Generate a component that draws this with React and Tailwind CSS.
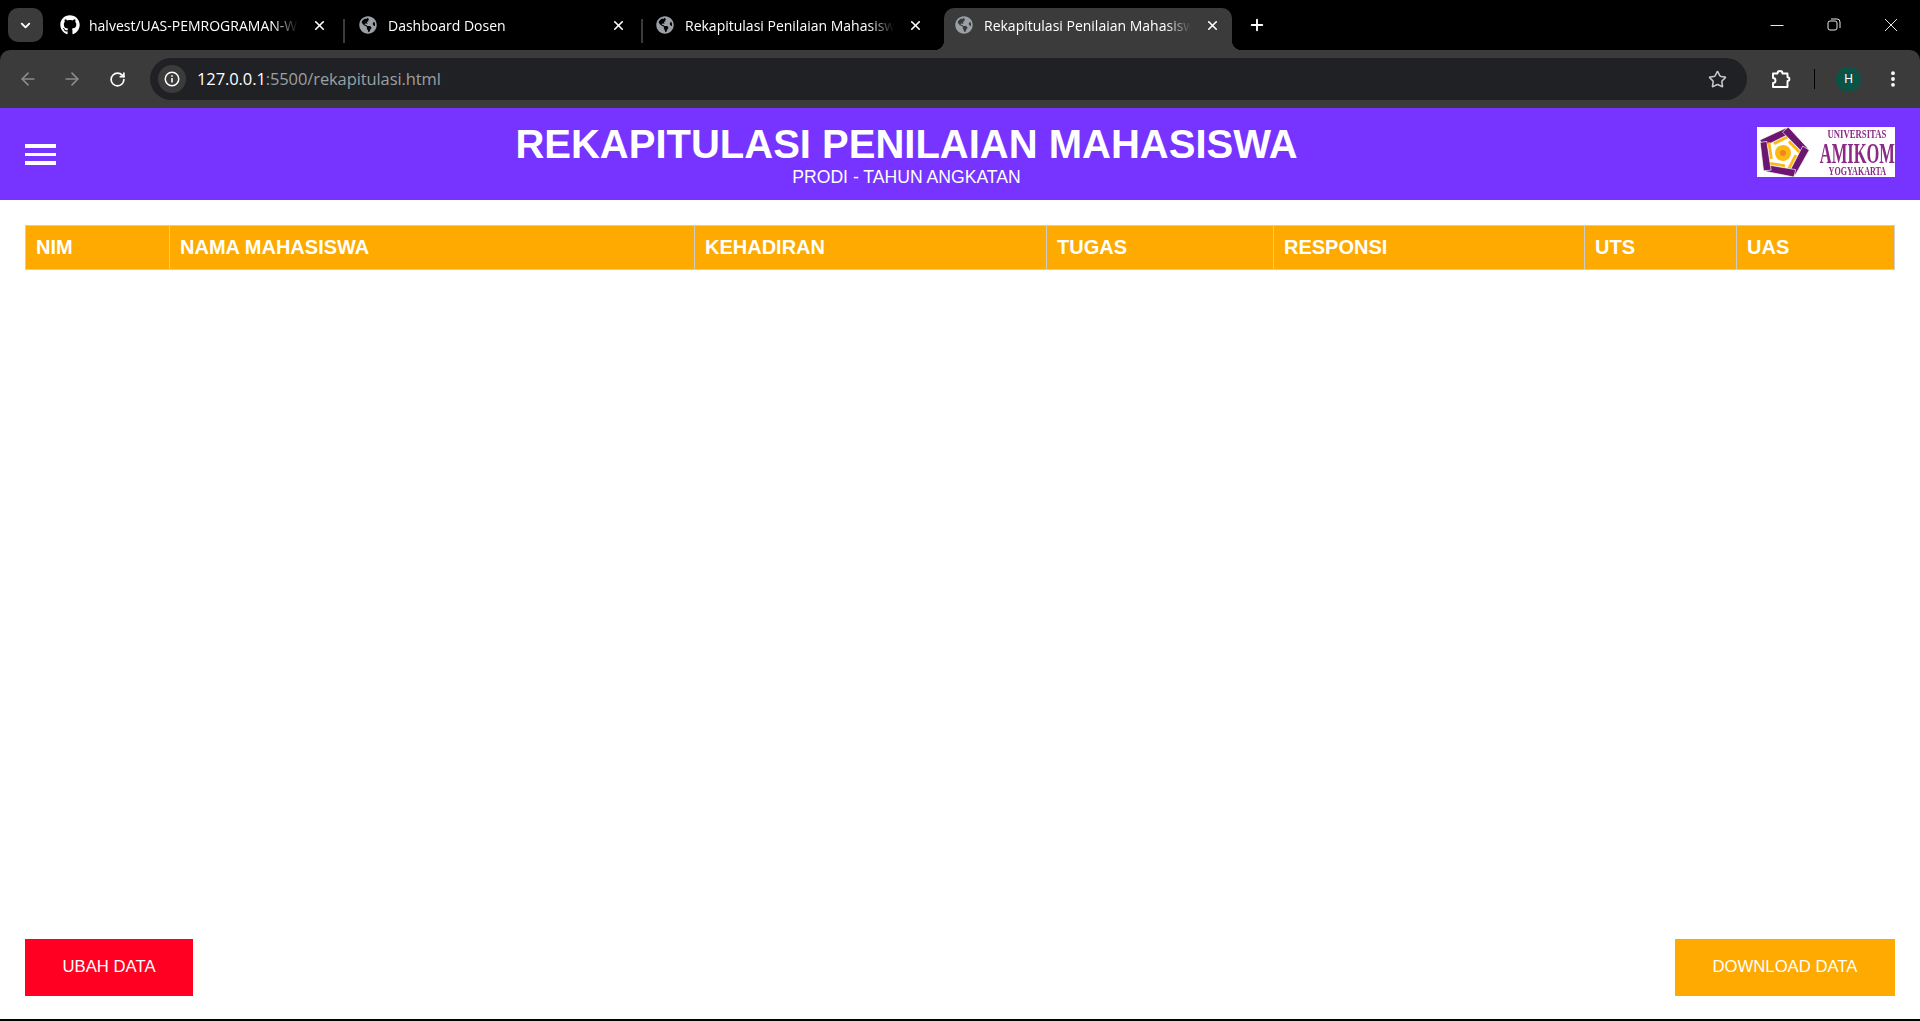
import React from "react";
import { FaGithub, FaGlobeAmericas } from "react-icons/fa";
import { ArrowLeft, ArrowRight, RotateCw, Star, EllipsisVertical, X, Plus, ChevronDown } from "lucide-react";

function Tab({ icon, title, active, width, pad, sep }) {
  return (
    <div className={`relative flex h-[42px] shrink-0 items-center pb-[8px] ${pad} ${width} ${active ? "rounded-t-[10px] bg-[#3b3b3b]" : ""}`}>
      {sep && <span className="absolute left-[-1px] top-[11px] h-[24px] w-[2px] bg-[#3b3b3b]" />}
      {active && (
        <>
          <span className="absolute bottom-0 left-[-10px] h-[10px] w-[10px] bg-[radial-gradient(circle_at_0_0,transparent_10px,#3b3b3b_10.5px)]" />
          <span className="absolute bottom-0 right-[-10px] h-[10px] w-[10px] bg-[radial-gradient(circle_at_100%_0,transparent_10px,#3b3b3b_10.5px)]" />
        </>
      )}
      <span className="flex w-[20px] shrink-0 items-center justify-start">{icon}</span>
      <span className="ml-[9px] min-w-0 flex-1 overflow-hidden whitespace-nowrap text-[14px] text-white font-['Open_Sans',sans-serif] [mask-image:linear-gradient(to_right,black_88%,transparent_100%)]">
        {title}
      </span>
      <X size={15} strokeWidth={2.6} className="ml-[14px] shrink-0 text-white" />
    </div>
  );
}

function Logo() {
  return (
    <div className="mb-[4px] flex h-[50px] w-[138px] shrink-0 bg-white">
      <svg width="62" height="50" viewBox="0 0 62 50" className="shrink-0">
        {[0, 72, 144, 216, 288].map((a) => (
          <g key={a} transform={`rotate(${a} 26 26)`}>
            <polygon points="16,15.5 31,8 32.5,10.5 17.5,18" fill="#fdb913" />
            <polygon points="3,13 29,1 32,7 6,20" fill="#6b1670" stroke="white" strokeWidth="0.6" />
          </g>
        ))}
        <circle cx="26" cy="26" r="8" fill="#fdb913" />
        <circle cx="26" cy="26" r="3" fill="#f58220" />
      </svg>
      <div className="flex min-w-0 flex-1 flex-col items-center font-['Liberation_Serif',serif] font-bold text-[#8a2a86]">
        <span className="whitespace-nowrap text-[13px] leading-[13px] [transform:scaleX(0.67)]">UNIVERSITAS</span>
        <span className="whitespace-nowrap text-[30px] leading-[26px] [transform:scaleX(0.55)]">AMIKOM</span>
        <span className="whitespace-nowrap text-[13px] leading-[10px] [transform:scaleX(0.62)]">YOGYAKARTA</span>
      </div>
    </div>
  );
}

const cols = [
  ["NIM", "w-[144px]"],
  ["NAMA MAHASISWA", "w-[525px]"],
  ["KEHADIRAN", "w-[352px]"],
  ["TUGAS", "w-[227px]"],
  ["RESPONSI", "w-[311px]"],
  ["UTS", "w-[152px]"],
  ["UAS", "w-[158px]"],
];

const globe = <FaGlobeAmericas size={18} className="text-[#9aa0a6]" />;

export default function App() {
  return (
    <div className="flex h-[1021px] w-full flex-col overflow-hidden bg-black font-['Liberation_Sans',sans-serif]">
      {/* tab strip */}
      <div className="flex h-[50px] shrink-0 items-end bg-black">
        <div className="mb-[8px] ml-[8px] mr-[4px] flex h-[34px] w-[35px] shrink-0 items-center justify-center rounded-[10px] bg-[#3b3b3b]">
          <ChevronDown size={15} strokeWidth={3} className="text-white" />
        </div>
        <Tab icon={<FaGithub size={20} className="text-white" />} title="halvest/UAS-PEMROGRAMAN-WEB" width="w-[297px]" pad="pl-[13px] pr-[17px]" />
        <Tab icon={globe} title="Dashboard Dosen" sep width="w-[298px]" pad="pl-[15px] pr-[16px]" />
        <Tab icon={globe} title="Rekapitulasi Penilaian Mahasiswa" sep width="w-[302px]" pad="pl-[14px] pr-[21px]" />
        <Tab icon={globe} title="Rekapitulasi Penilaian Mahasiswa" active width="w-[288px]" pad="pl-[11px] pr-[12px]" />
        <Plus size={18} strokeWidth={2.5} className="mb-[16px] ml-[16px] shrink-0 text-white" />
        <div className="mb-[16px] ml-auto flex items-center text-white">
          <svg width="58" height="18" viewBox="0 0 58 18" className="text-[#e8e8e8]">
            <path d="M24.5 9.5h13" stroke="currentColor" strokeWidth="1" fill="none" />
          </svg>
          <svg width="58" height="18" viewBox="0 0 58 18" className="text-[#e8e8e8]">
            <rect x="24" y="5" width="9" height="9" rx="2" stroke="currentColor" fill="none" />
            <path d="M27 3h6a3 3 0 0 1 3 3v6" stroke="currentColor" fill="none" />
          </svg>
          <svg width="58" height="18" viewBox="0 0 58 18" className="text-[#e8e8e8]">
            <path d="M23 3l12 12M35 3L23 15" stroke="currentColor" fill="none" />
          </svg>
        </div>
      </div>

      {/* toolbar */}
      <div className="flex h-[58px] shrink-0 items-start rounded-t-[10px] bg-[#3b3b3b] pt-[8px]">
        <div className="flex h-[42px] w-[150px] shrink-0 items-center">
          <ArrowLeft size={20} className="ml-[18px] text-[#8c8c8c]" />
          <ArrowRight size={20} className="ml-[24px] text-[#8c8c8c]" />
          <RotateCw size={17} strokeWidth={2.4} className="ml-[27px] text-white" />
        </div>
        <div className="flex h-[42px] w-[1597px] shrink-0 items-center rounded-full bg-[#202124] pl-[8px] pr-[20px]">
          <span className="flex h-[28px] w-[28px] shrink-0 items-center justify-center rounded-full bg-[#3b3b3b]">
            <svg width="16" height="16" viewBox="0 0 16 16">
              <circle cx="8" cy="8" r="6.75" stroke="white" strokeWidth="1.5" fill="none" />
              <path d="M8 7v4.5M8 4.3v1.5" stroke="white" strokeWidth="1.6" />
            </svg>
          </span>
          <span className="ml-[11px] whitespace-nowrap text-[16.5px] text-[#9aa0a6] font-['Open_Sans',sans-serif] tracking-[-0.1px]">
            <span className="text-white">127.0.0.1</span>:5500/rekapitulasi.html
          </span>
          <Star size={19} strokeWidth={2} className="ml-auto text-[#c7c7c7]" />
        </div>
        <div className="flex h-[42px] flex-1 items-center">
          <svg width="20" height="20" viewBox="0 0 20 20" className="ml-[24px] shrink-0">
            <path
              d="M2 4.5h4.5a2.5 2.5 0 0 1 5 0h5v3.7a1.9 1.9 0 0 1 0 3.8v6H2v-4a2.5 2.5 0 0 0 0-5z"
              stroke="white"
              strokeWidth="1.9"
              strokeLinejoin="round"
              fill="none"
            />
          </svg>
          <span className="ml-[23px] h-[20px] w-[1px] bg-black" />
          <span className="ml-[21px] flex h-[25px] w-[25px] items-center justify-center rounded-full bg-[#0b5345] text-[12px] text-white">H</span>
          <EllipsisVertical size={20} strokeWidth={2.6} className="ml-[22px] text-white" />
        </div>
      </div>

      {/* page */}
      <div className="mb-[2px] flex flex-1 flex-col bg-white">
        <header className="flex h-[92px] shrink-0 items-center justify-between bg-[#7733ff] px-[25px]">
          <div className="flex w-[31px] shrink-0 flex-col gap-[5px]">
            <span className="h-[4px] bg-white" />
            <span className="h-[3px] bg-white" />
            <span className="h-[4px] bg-white" />
          </div>
          <div className="flex flex-col items-center pb-[2px] text-white">
            <h1 className="text-[40px] font-bold leading-[48px]">REKAPITULASI PENILAIAN MAHASISWA</h1>
            <p className="-mt-[1px] text-[17.6px] leading-[20px]">PRODI - TAHUN ANGKATAN</p>
          </div>
          <Logo />
        </header>

        <main className="flex-1 px-[25px] pt-[25px]">
          <table className="w-[1869px] table-fixed border-collapse">
            <thead>
              <tr className="h-[44px] bg-[#ffaa00]">
                {cols.map(([label, w]) => (
                  <th key={label} className={`${w} border border-[#cccccc] px-[10px] pb-[2px] text-left text-[20px] font-bold text-white`}>
                    {label}
                  </th>
                ))}
              </tr>
            </thead>
          </table>
        </main>

        <footer className="flex shrink-0 items-center justify-between px-[25px] pb-[23px]">
          <button className="flex h-[57px] w-[168px] items-center justify-center bg-[#ff0022] pb-[2px] text-[16.7px] text-white">UBAH DATA</button>
          <button className="flex h-[57px] w-[220px] items-center justify-center bg-[#ffaa00] pb-[2px] text-[16.7px] text-white">DOWNLOAD DATA</button>
        </footer>
      </div>
    </div>
  );
}
